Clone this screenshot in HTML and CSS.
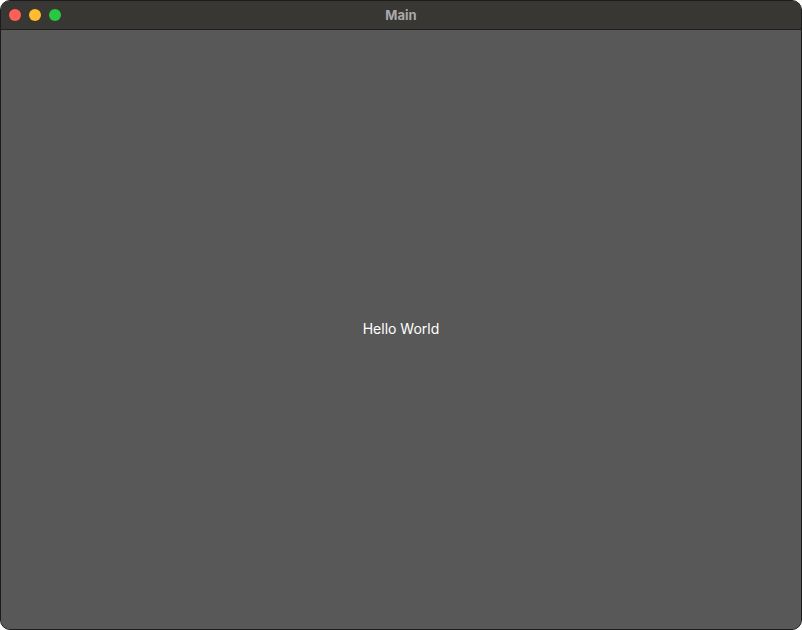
FILE: index.html
```html
<!DOCTYPE html>
<html>
<head>
<meta charset="utf-8">
<link rel="stylesheet" href="styles.css">
</head>
<body>
<div class="window">
  <div class="titlebar">
    <div class="lights">
      <span class="light red"></span>
      <span class="light yellow"></span>
      <span class="light green"></span>
    </div>
    <div class="title">Main</div>
  </div>
  <div class="content">
    <div class="hello">Hello World</div>
  </div>
</div>
</body>
</html>
```
FILE: styles.css
```css
html, body {
  margin: 0;
  padding: 0;
  background: #ffffff;
}
body {
  width: 802px;
  height: 630px;
  overflow: hidden;
  font-family: "Inter", "Liberation Sans", sans-serif;
}
.window {
  box-sizing: border-box;
  width: 802px;
  height: 630px;
  border-radius: 10px;
  border: 1px solid #1c1c1c;
  box-shadow: inset 0 0 0 1px #5e5e5e;
  overflow: hidden;
  display: flex;
  flex-direction: column;
  background: #585858;
}
.titlebar {
  position: relative;
  height: 28px;
  flex: 0 0 28px;
  background: #393734;
  border-bottom: 1px solid #1f1f1f;
  display: flex;
  align-items: center;
  justify-content: center;
}
.lights {
  position: absolute;
  left: 8px;
  top: 8px;
  display: flex;
  gap: 8px;
}
.light {
  width: 12px;
  height: 12px;
  border-radius: 50%;
}
.red { background: #fe5f57; }
.yellow { background: #febc2e; }
.green { background: #28c840; }
.title {
  color: #a9a9a9;
  font-size: 13px;
  font-weight: 700;
  margin-top: -1px;
}
.content {
  flex: 1;
  display: flex;
  align-items: center;
  justify-content: center;
  background: #585858;
}
.hello {
  color: #ffffff;
  font-size: 14px;
  margin-top: -3px;
}
```
